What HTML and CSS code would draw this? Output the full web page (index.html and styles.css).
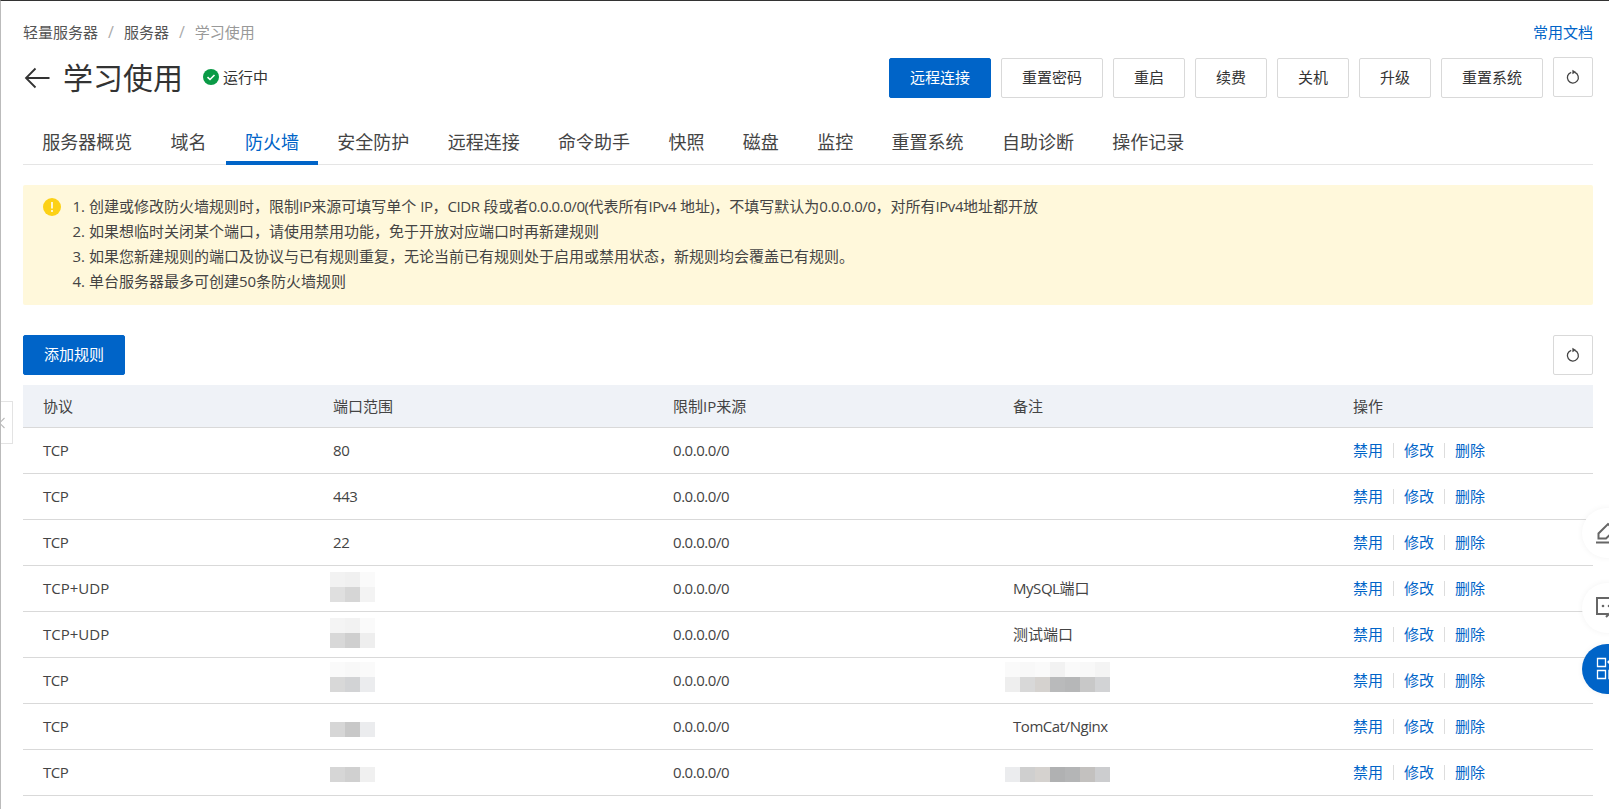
FILE: index.html
```html
<!DOCTYPE html>
<html lang="zh-CN">
<head>
<meta charset="utf-8">
<title>学习使用 - 防火墙</title>
<link rel="stylesheet" href="styles.css">
</head>
<body>
<div class="app">
  <div class="crumb-row">
    <nav class="crumbs">
      <a>轻量服务器</a><span class="slash">/</span><a>服务器</a><span class="slash">/</span><span class="current">学习使用</span>
    </nav>
    <a class="doc-link">常用文档</a>
  </div>

  <header class="head">
    <div class="head-left">
      <svg class="back" width="26" height="22" viewBox="0 0 26 22"><path d="M11.500 1.500 2 11l9.500 9.500M2 11h23.500" fill="none" stroke="#333" stroke-width="1.800"/></svg>
      <h1 class="title">学习使用</h1>
      <span class="status">
        <svg width="16" height="16" viewBox="0 0 16 16"><circle cx="8" cy="8" r="8" fill="#0a9a46"/><path d="M4.500 8.200 7 10.500l4.500-4.500" fill="none" stroke="#fff" stroke-width="1.600"/></svg>
        <span class="status-text">运行中</span>
      </span>
    </div>
    <div class="actions">
      <button class="btn primary">远程连接</button>
      <button class="btn">重置密码</button>
      <button class="btn">重启</button>
      <button class="btn">续费</button>
      <button class="btn">关机</button>
      <button class="btn">升级</button>
      <button class="btn">重置系统</button>
      <button class="btn icon-btn raised">
        <svg width="16" height="16" viewBox="0 0 16 16"><path d="M9.800 3.400A5.500 5.500 0 1 1 6.200 3.300" fill="none" stroke="#444" stroke-width="1.300"/><path d="M7.400 0.800 11 3 7.400 5.200z" fill="#444"/></svg>
      </button>
    </div>
  </header>

  <nav class="tabs">
    <a class="tab">服务器概览</a>
    <a class="tab">域名</a>
    <a class="tab active">防火墙</a>
    <a class="tab">安全防护</a>
    <a class="tab">远程连接</a>
    <a class="tab">命令助手</a>
    <a class="tab">快照</a>
    <a class="tab">磁盘</a>
    <a class="tab">监控</a>
    <a class="tab">重置系统</a>
    <a class="tab">自助诊断</a>
    <a class="tab">操作记录</a>
  </nav>

  <section class="alert">
    <svg class="alert-icon" width="18" height="18" viewBox="0 0 18 18"><circle cx="9" cy="9" r="9" fill="#fcd116"/><path d="M9 4v6.500" stroke="#fff" stroke-width="1.600"/><circle cx="9" cy="13" r="1" fill="#fff"/></svg>
    <div class="alert-text">
      <p>1. 创建或修改防火墙规则时，限制<span class="lat">IP</span>来源可填写单个 <span class="lat">IP</span>，<span class="lat">CIDR</span> 段或者<span class="lat">0.0.0.0/0(</span>代表所有<span class="lat">IPv4</span> 地址)，不填写默认为<span class="lat">0.0.0.0/0</span>，对所有<span class="lat">IPv4</span>地址都开放</p>
      <p>2. 如果想临时关闭某个端口，请使用禁用功能，免于开放对应端口时再新建规则</p>
      <p>3. 如果您新建规则的端口及协议与已有规则重复，无论当前已有规则处于启用或禁用状态，新规则均会覆盖已有规则。</p>
      <p>4. 单台服务器最多可创建50条防火墙规则</p>
    </div>
  </section>

  <div class="toolbar">
    <button class="btn primary">添加规则</button>
    <button class="btn icon-btn">
      <svg width="16" height="16" viewBox="0 0 16 16"><path d="M9.800 3.400A5.500 5.500 0 1 1 6.200 3.300" fill="none" stroke="#444" stroke-width="1.300"/><path d="M7.400 0.800 11 3 7.400 5.200z" fill="#444"/></svg>
    </button>
  </div>

  <table class="rules">
    <colgroup><col class="col-a"><col class="col-b"><col class="col-b"><col class="col-b"><col class="col-c"></colgroup>
    <thead>
      <tr><th>协议</th><th>端口范围</th><th>限制IP来源</th><th>备注</th><th>操作</th></tr>
    </thead>
    <tbody>
      <tr><td class="lat">TCP</td><td class="lat">80</td><td class="lat">0.0.0.0/0</td><td></td><td class="ops"><a>禁用</a><i></i><a>修改</a><i></i><a>删除</a></td></tr>
      <tr><td class="lat">TCP</td><td class="lat">443</td><td class="lat">0.0.0.0/0</td><td></td><td class="ops"><a>禁用</a><i></i><a>修改</a><i></i><a>删除</a></td></tr>
      <tr><td class="lat">TCP</td><td class="lat">22</td><td class="lat">0.0.0.0/0</td><td></td><td class="ops"><a>禁用</a><i></i><a>修改</a><i></i><a>删除</a></td></tr>
      <tr>
        <td>TCP+UDP</td>
        <td class="cell-mosaic"><div class="mosaic port two"><b class="t-f2"></b><b class="t-f0"></b><b class="t-fa"></b><b class="t-df"></b><b class="t-d6"></b><b class="t-f3"></b></div></td>
        <td class="lat">0.0.0.0/0</td><td><span class="lat">MySQL</span>端口</td>
        <td class="ops"><a>禁用</a><i></i><a>修改</a><i></i><a>删除</a></td>
      </tr>
      <tr>
        <td>TCP+UDP</td>
        <td class="cell-mosaic"><div class="mosaic port two"><b class="t-f4"></b><b class="t-f2"></b><b class="t-fa"></b><b class="t-d8"></b><b class="t-cf"></b><b class="t-ee"></b></div></td>
        <td class="lat">0.0.0.0/0</td><td>测试端口</td>
        <td class="ops"><a>禁用</a><i></i><a>修改</a><i></i><a>删除</a></td>
      </tr>
      <tr>
        <td class="lat">TCP</td>
        <td class="cell-mosaic"><div class="mosaic port two low"><b class="t-fa"></b><b class="t-f8"></b><b class="t-fa"></b><b class="t-d8"></b><b class="t-d2"></b><b class="t-ec"></b></div></td>
        <td class="lat">0.0.0.0/0</td>
        <td class="cell-mosaic"><div class="mosaic note two low"><b class="t-fa"></b><b class="t-f8"></b><b class="t-fa"></b><b class="t-f2"></b><b class="t-fa"></b><b class="t-f8"></b><b class="t-f4"></b><b class="t-ee"></b><b class="t-d8"></b><b class="t-d4"></b><b class="t-b9"></b><b class="t-b7"></b><b class="t-c8"></b><b class="t-d2"></b></div></td>
        <td class="ops"><a>禁用</a><i></i><a>修改</a><i></i><a>删除</a></td>
      </tr>
      <tr>
        <td class="lat">TCP</td>
        <td class="cell-mosaic"><div class="mosaic port one"><b class="t-d6"></b><b class="t-c8"></b><b class="t-ec"></b></div></td>
        <td class="lat">0.0.0.0/0</td><td class="lat">TomCat/Nginx</td>
        <td class="ops"><a>禁用</a><i></i><a>修改</a><i></i><a>删除</a></td>
      </tr>
      <tr>
        <td class="lat">TCP</td>
        <td class="cell-mosaic"><div class="mosaic port one high"><b class="t-d6"></b><b class="t-d0"></b><b class="t-f0"></b></div></td>
        <td class="lat">0.0.0.0/0</td>
        <td class="cell-mosaic"><div class="mosaic note one high"><b class="t-ec"></b><b class="t-cf"></b><b class="t-d4"></b><b class="t-b0"></b><b class="t-b5"></b><b class="t-c2"></b><b class="t-cc"></b></div></td>
        <td class="ops"><a>禁用</a><i></i><a>修改</a><i></i><a>删除</a></td>
      </tr>
    </tbody>
  </table>

  <div class="side-handle">
    <svg width="6" height="12" viewBox="0 0 6 12"><path d="M5.500 1 .5 6l5 5" fill="none" stroke="#bbb" stroke-width="1.200"/></svg>
  </div>

  <button class="float f-note">
    <svg width="28" height="24" viewBox="0 0 28 24"><path d="M0 21.500h26M2.500 17.500v-5L12 3l7 6-9 8.500z" fill="none" stroke="#666" stroke-width="2"/></svg>
  </button>
  <button class="float f-chat">
    <svg width="28" height="24" viewBox="0 0 28 24"><path d="M12 18H1V2h24v16h-5M10 21l6-6" fill="none" stroke="#666" stroke-width="2"/><circle cx="7" cy="10" r="1.300" fill="#666"/><circle cx="13" cy="10" r="1.300" fill="#666"/></svg>
  </button>
  <button class="float f-apps">
    <svg width="28" height="24" viewBox="0 0 28 24"><path d="M1.500 1.500h8v8h-8zM1.500 13.500h8v8h-8zM13 13.500h8v8h-8zM17 0l5 5-5 5-5-5z" fill="none" stroke="#fff" stroke-width="1.300"/></svg>
  </button>
</div>
</body>
</html>
```
FILE: styles.css
```css
* { box-sizing: border-box; }
html, body { margin: 0; height: 100%; overflow: hidden; background: #fff; }
body {
  font-family: "Open Sans", "Noto Sans CJK SC", sans-serif;
  font-size: 15px;
  color: #333;
}
.app {
  position: relative;
  height: 809px;
  overflow: hidden;
  border-top: 1px solid #333;
  border-left: 1px solid #bbb;
  padding: 21px 16px 0 22px;
}
a { text-decoration: none; }

.crumb-row { display: flex; justify-content: space-between; align-items: center; height: 20px; line-height: 18px; }
.crumbs a { color: #555; }
.crumbs .slash { color: #aaa; margin: 0 10px; font-size: 16px; }
.crumbs .current { color: #999; }
.doc-link { color: #0064c8; }

.head { display: flex; justify-content: space-between; align-items: center; margin-top: 16px; height: 40px; }
.head-left { display: flex; align-items: center; }
.back { margin-left: 1px; }
.title { margin: 0 0 0 13px; font-size: 30px; line-height: 40px; font-weight: 400; color: #333; }
.status { display: flex; align-items: center; gap: 4px; margin-left: 20px; margin-top: -2px; }
.status-text { margin-top: -2px; }
.actions { display: flex; gap: 10px; }

.btn {
  height: 40px;
  padding: 0 20px 4px;
  border: 1px solid #d9d9d9;
  border-radius: 2px;
  background: #fff;
  color: #333;
  font: inherit;
}
.btn.primary { background: #0064c8; border-color: #0064c8; color: #fff; }
.icon-btn { width: 40px; padding: 0; display: flex; align-items: center; justify-content: center; }
.raised { margin-top: -1px; }

.tabs { display: flex; height: 43px; margin-top: 24px; border-bottom: 1px solid #e5e5e5; }
.tab {
  padding: 0 19.2px;
  height: 43px;
  line-height: 40px;
  font-size: 18px;
  color: #444;
}
.tab.active { color: #0064c8; border-bottom: 4px solid #0064c8; }

.alert {
  display: flex;
  margin-top: 20px;
  height: 120px;
  padding: 10px 20px;
  background: #fff8db;
  border-radius: 2px;
}
.alert-icon { flex: none; margin-top: 3px; }
.alert-text { margin-left: 11.5px; }
.alert-text p { margin: -1px 0 1px; line-height: 25px; color: #444; }
.alert-text p + p { margin-top: -1px; }
.lat { letter-spacing: -.45px; }

.toolbar { display: flex; justify-content: space-between; margin-top: 30px; }

.rules { width: 1570px; margin-top: 10px; table-layout: fixed; border-collapse: separate; border-spacing: 0; }
.col-a { width: 290px; }
.col-b { width: 340px; }
.col-c { width: 260px; }
.rules th, .rules td { padding: 0 0 2px 20px; text-align: left; font-weight: 400; border-bottom: 1px solid #d9d9d9; }
.rules th { height: 43px; background: #eff2f7; color: #444; }
.rules td { height: 46px; color: #444; }
.rules td.cell-mosaic { position: relative; padding: 0; }
.ops { white-space: nowrap; }
.ops a { color: #0064c8; }
.ops i { display: inline-block; width: 1px; height: 15px; margin: 0 10px; background: #ddd; vertical-align: -2px; }

.mosaic { position: absolute; display: grid; grid-auto-rows: 15px; }
.mosaic b { display: block; }
.port { left: 17px; grid-template-columns: repeat(3, 15px); }
.note { left: 12px; grid-template-columns: repeat(7, 15px); }
.mosaic.two { top: 6px; }
.mosaic.two.low { top: 4px; }
.mosaic.one { top: 18px; }
.mosaic.one.high { top: 17px; }
.t-fa { background: #fafafa; } .t-f8 { background: #f8f8f8; } .t-f4 { background: #f4f4f4; }
.t-f3 { background: #f3f3f3; } .t-f2 { background: #f2f2f2; } .t-f0 { background: #f0f0f0; }
.t-ee { background: #eeeeee; } .t-ec { background: #ebecee; } .t-df { background: #dfdfdf; }
.t-d8 { background: #d8d8d8; } .t-d6 { background: #d6d6d6; } .t-d4 { background: #d5d2cf; }
.t-d2 { background: #d2d3d5; } .t-d0 { background: #d0d0d0; } .t-cf { background: #cfcfcf; }
.t-cc { background: #cccdcf; } .t-c8 { background: #c8c8c8; } .t-c2 { background: #c3c1bf; }
.t-b9 { background: #b9babb; } .t-b7 { background: #b6b7b8; } .t-b5 { background: #b4b5b6; }
.t-b0 { background: #b0b1b2; }

.side-handle {
  position: absolute;
  left: -1px;
  top: 400px;
  width: 13px;
  height: 43px;
  background: #fff;
  border: 1px solid #e3e3e3;
  display: flex;
  align-items: center;
}
.side-handle svg { margin-left: -2px; }

.float {
  position: absolute;
  left: 1581px;
  width: 50px;
  height: 50px;
  padding: 0 0 0 14px;
  border: 0;
  border-radius: 50%;
  background: #fff;
  box-shadow: 0 0 6px rgba(0, 0, 0, .05);
  display: flex;
  align-items: center;
}
.f-note { top: 507px; }
.f-chat { top: 582px; }
.f-apps { top: 643px; background: #0064c8; }
```
